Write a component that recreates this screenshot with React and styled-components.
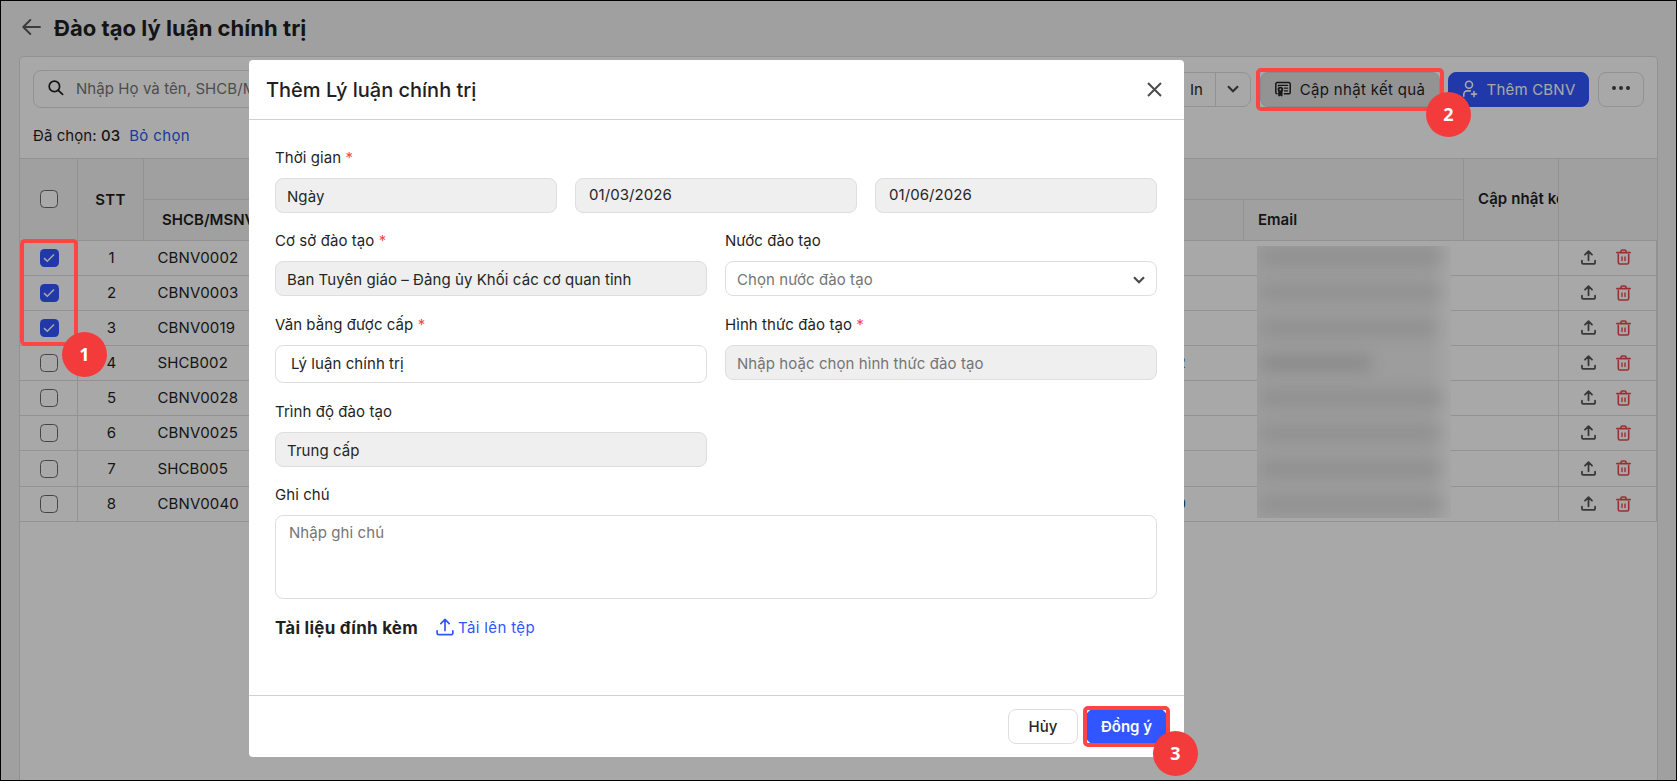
import React from 'react';
import styled, { createGlobalStyle } from 'styled-components';

const GlobalStyle = createGlobalStyle`
  *, *::before, *::after { box-sizing: border-box; }
  body {
    margin: 0;
    overflow: hidden;
    font-family: Inter, "Liberation Sans", sans-serif;
    font-size: 15px;
    letter-spacing: 0.07px;
    color: #1f1f1f;
  }
  svg { display: block; flex: none; }
`;

const Screen = styled.div`
  position: relative;
  width: 1677px;
  height: 781px;
  overflow: hidden;
  background: #f3f3f3;
`;

const Outline = styled.div`
  position: absolute;
  inset: 0;
  border: 1px solid #000;
`;

const PageColumn = styled.div`
  height: 100%;
  padding: 0 19px;
  display: flex;
  flex-direction: column;
`;

const PageHeader = styled.header`
  height: 56px;
  flex: none;
  display: flex;
  align-items: center;
  gap: 13px;
  padding-left: 3px;
`;

const PageTitle = styled.h1`
  margin: 0;
  font-size: 22px;
  line-height: 30px;
  font-weight: 650;
  letter-spacing: 0.04px;
`;

const Panel = styled.main`
  position: relative;
  flex: 1;
  background: #fff;
  border: 1px solid #dedede;
  border-bottom: 0;
  border-radius: 5px 5px 0 0;
`;

const Toolbar = styled.div`
  display: flex;
  align-items: center;
  justify-content: space-between;
  height: 38px;
  margin: 13px 13px 0 13px;
`;

const SearchBox = styled.div`
  display: flex;
  align-items: center;
  gap: 12px;
  width: 420px;
  height: 38px;
  padding: 0 0 2px 14px;
  border: 1px solid #dedede;
  border-radius: 8px;
  color: #757575;
  white-space: nowrap;
`;

const Actions = styled.div`
  display: flex;
  align-items: center;
`;

const SplitButton = styled.div`
  display: flex;
  height: 35px;
  margin-right: 9px;
  border: 1px solid #dedede;
  border-radius: 8px;
`;

const SplitPart = styled.span`
  display: flex;
  align-items: center;
  justify-content: ${p => (p.$end ? 'flex-end' : 'center')};
  width: ${p => p.$width}px;
  padding-right: ${p => (p.$end ? 12 : 0)}px;
  border-left: ${p => (p.$divided ? '1px solid #dedede' : '0')};
`;

const ToolButton = styled.button`
  display: flex;
  align-items: center;
  justify-content: center;
  gap: ${p => p.$gap || 9}px;
  width: ${p => p.$width}px;
  height: 35px;
  margin: 0 0 0 ${p => p.$before || 0}px;
  padding: 0;
  border: 1px solid ${p => p.$line || '#dedede'};
  border-radius: 8px;
  background: ${p => p.$fill || 'transparent'};
  color: ${p => p.$ink || '#1f1f1f'};
  font: inherit;
  letter-spacing: ${p => p.$track || 0}px;
  white-space: nowrap;
`;

const Selection = styled.div`
  display: flex;
  gap: 9px;
  height: 50px;
  padding: 17px 13px 0;
  line-height: 22px;
`;

const Count = styled.span`
  font-weight: 500;
`;

const Link = styled.a`
  color: #3156f5;
  letter-spacing: 0.35px;
`;

const columns = '58px 66px 1100px 220px 95px 98px';

const TableHead = styled.div`
  display: grid;
  grid-template-columns: 58px 66px 1320px 95px 98px;
  height: 82px;
  border-top: 1px solid #dedede;
  background: #f3f3f3;
  font-weight: 600;
`;

const HeadCell = styled.div`
  display: flex;
  align-items: center;
  justify-content: ${p => (p.$start ? 'flex-start' : 'center')};
  padding: 0 0 ${p => p.$lift || 0}px ${p => p.$start || 0}px;
  border-right: ${p => (p.$last ? '0' : '1px solid #dedede')};
  border-bottom: 1px solid #dedede;
  letter-spacing: ${p => p.$track || 0}px;
  overflow: hidden;
  white-space: nowrap;
`;

const HeadGroup = styled.div`
  display: grid;
  grid-template-columns: 1100px 220px;
  grid-template-rows: 41px 41px;
`;

const GroupTitle = styled.div`
  grid-column: span 2;
  border-right: 1px solid #dedede;
  border-bottom: 1px solid #dedede;
`;

const Row = styled.div`
  display: grid;
  grid-template-columns: ${columns};
  height: ${p => p.$height}px;
  border-bottom: 1px solid #dedede;
`;

const Cell = styled.div`
  display: flex;
  align-items: center;
  justify-content: ${p => p.$align || 'center'};
  gap: 20px;
  padding: ${p => p.$pad || '0 0 1px 1px'};
  border-right: ${p => (p.$lined ? '1px solid #dedede' : '0')};
`;

const CodeText = styled.span`
  letter-spacing: 0.12px;
`;

const PhoneTail = styled.span`
  color: ${p => p.$ink};
`;

const CheckBox = styled.span`
  display: flex;
  align-items: center;
  justify-content: center;
  width: ${p => (p.$on ? 19 : 18)}px;
  height: 18px;
  margin-left: ${p => (p.$on ? 1 : 0)}px;
  border: ${p => (p.$on ? '0' : '1px solid #6a6a6a')};
  border-radius: 4.5px;
  background: ${p => (p.$on ? '#3156ff' : '#fff')};
`;

const Redaction = styled.div`
  position: absolute;
  left: 1237px;
  top: 189px;
  width: 194px;
  height: 272px;
  padding: 4px 12px 0 4px;
  overflow: hidden;
  background: linear-gradient(to right, #eeeeee 0 88%, #fcfcfc 100%);
`;

const Smudge = styled.div`
  width: ${p => p.$width}px;
  height: 14px;
  margin-bottom: 21.3px;
  background: ${p => p.$tone};
  filter: blur(8px);
`;

const Backdrop = styled.div`
  position: absolute;
  inset: 0;
  background: rgba(0, 0, 0, 0.34);
`;

const Modal = styled.section`
  position: absolute;
  left: 249px;
  top: 60px;
  width: 935px;
  height: 697px;
  display: flex;
  flex-direction: column;
  border-radius: 4px;
  background: #fff;
`;

const ModalHeader = styled.div`
  display: flex;
  align-items: center;
  justify-content: space-between;
  height: 60px;
  padding: 0 22px 0 17px;
  border-bottom: 1px solid #d2d2d2;
`;

const ModalTitle = styled.h2`
  margin: 0;
  font-size: 20px;
  line-height: 28px;
  font-weight: 550;
  letter-spacing: 0;
`;

const ModalBody = styled.div`
  flex: 1;
  padding: 27px 27px 0 26px;
`;

const FormRow = styled.div`
  display: grid;
  grid-template-columns: ${p => p.$cols};
  gap: 18px;
  align-items: start;
  margin-top: ${p => p.$top || 0}px;
`;

const FieldWrap = styled.label`
  display: block;
  min-width: 0;
`;

const LabelText = styled.span`
  display: block;
  height: 22px;
  margin-bottom: 9px;
  line-height: 21px;
  white-space: pre;
`;

const Star = styled.span`
  color: #f5484a;
`;

const Control = styled.div`
  display: flex;
  align-items: ${p => (p.$area ? 'flex-start' : 'center')};
  justify-content: space-between;
  height: ${p => p.$height || 35}px;
  padding: ${p => p.$pad || '2px 11px 0'};
  border: 1px solid #dedede;
  border-radius: 8px;
  background: ${p => (p.$off ? '#efefef' : '#fff')};
  color: ${p => (p.$hint ? '#757575' : '#262626')};
  white-space: nowrap;
`;

const Attachment = styled.div`
  display: flex;
  align-items: center;
  gap: 18px;
  height: 22px;
  margin-top: 17px;
`;

const AttachmentTitle = styled.span`
  padding-top: 2px;
  font-size: 17px;
  font-weight: 650;
  letter-spacing: 0.25px;
`;

const UploadLink = styled.a`
  display: flex;
  align-items: center;
  gap: 4px;
  color: #3156ff;
  letter-spacing: 0.36px;
`;

const ModalFooter = styled.div`
  display: flex;
  justify-content: flex-end;
  gap: 8px;
  height: 62px;
  padding: 13px 17px 0;
  border-top: 1px solid #d2d2d2;
`;

const FooterButton = styled.button`
  width: ${p => p.$width}px;
  height: 35px;
  padding: 0;
  border: 1px solid ${p => (p.$primary ? '#3156ff' : '#dedede')};
  border-radius: 8px;
  background: ${p => (p.$primary ? '#3156ff' : '#fff')};
  color: ${p => (p.$primary ? '#fff' : '#262626')};
  font: inherit;
  font-weight: ${p => (p.$primary ? 600 : 500)};
`;

const Frame = styled.div`
  position: absolute;
  left: ${p => p.$x}px;
  top: ${p => p.$y}px;
  width: ${p => p.$w}px;
  height: ${p => p.$h}px;
  border: 4px solid #ff4444;
  border-radius: 5px;
`;

const Badge = styled.div`
  position: absolute;
  left: ${p => p.$x}px;
  top: ${p => p.$y}px;
  width: 45px;
  height: 45px;
  border-radius: 50%;
  background: #f33b3b;
  color: #fff;
  font: 700 18px/45px "Noto Sans", "Open Sans", sans-serif;
  text-align: center;
`;

const line = { fill: 'none', strokeLinecap: 'round', strokeLinejoin: 'round' };

const BackIcon = () => (
  <svg width="19" height="18" viewBox="0 0 19 18" {...line} stroke="#5a5a5a" strokeWidth="1.9">
    <path d="M18 8H1.5M8.3 1 1.3 8 8.3 15" />
  </svg>
);
const SearchIcon = () => (
  <svg width="16" height="16" viewBox="0 0 16 16" {...line} stroke="#1f1f1f" strokeWidth="1.7">
    <circle cx="6.4" cy="6.4" r="5.2" />
    <path d="m10.3 10.3 4.3 4" />
  </svg>
);
const ChevronIcon = () => (
  <svg width="12" height="8" viewBox="0 0 12 8" fill="none" stroke="#4a4a4a" strokeWidth="2.2">
    <path d="m1 1.2 5 5 5-5" />
  </svg>
);
const CloseIcon = () => (
  <svg width="15" height="15" viewBox="0 0 15 15" fill="none" stroke="#4c4c4c" strokeWidth="2">
    <path d="m1 1 13 13M14 1 1 14" />
  </svg>
);
const CertificateIcon = () => (
  <svg width="16" height="16" viewBox="0 0 16 16" {...line} stroke="#222" strokeWidth="1.5">
    <path d="M2 12.8a1.3 1.3 0 0 1-1.2-1.3V3A1.4 1.4 0 0 1 2.2 1.6h11.6A1.4 1.4 0 0 1 15.2 3v8.4a1.4 1.4 0 0 1-1.4 1.4H9.4" />
    <path d="M3.4 5V4.4h9.2M9.4 7.2h3.2M9.4 9.8h3.2" strokeWidth="1.2" />
    <circle cx="5.4" cy="8.6" r="1.9" strokeWidth="1.8" />
    <path d="M3.8 10.6v4.5l1.6-.9 1.6.9v-4.5z" fill="#222" strokeWidth="1" />
  </svg>
);
const UserAddIcon = () => (
  <svg width="16" height="18" viewBox="0 0 16 18" {...line} stroke="#fff" strokeWidth="1.6">
    <circle cx="7" cy="4.8" r="3.5" />
    <path d="M1.8 16.2v-1.8a3.5 3.5 0 0 1 3.5-3.5h3M12 11.6v5M9.5 14.1h5" />
  </svg>
);
const DotsIcon = () => (
  <svg width="18" height="6" viewBox="0 0 18 6" fill="#444">
    <circle cx="2" cy="2" r="2" />
    <circle cx="9" cy="2" r="2" />
    <circle cx="16" cy="2" r="2" />
  </svg>
);
const CheckIcon = () => (
  <svg width="12" height="10" viewBox="0 0 12 10" fill="none" stroke="#fff" strokeWidth="1.5">
    <path d="M1 5.1 4.3 8.3 11 1.5" />
  </svg>
);
const UploadIcon = ({ size = 15, color = '#555', weight = 1.9 }) => (
  <svg width={size} height={size} viewBox="0 0 16 16" {...line} stroke={color} strokeWidth={weight}>
    <path d="M1 11.4v2.2a1.2 1.2 0 0 0 1.2 1.2h11.6a1.2 1.2 0 0 0 1.2-1.2v-2.2M8 11V1.4M4.3 5 8 1.3 11.7 5" />
  </svg>
);
const TrashIcon = () => (
  <svg width="15" height="16" viewBox="0 0 15 16" {...line} stroke="#e74a4c" strokeWidth="1.6">
    <path d="M.8 3.6h13.4M5 3.4V2.2A1.2 1.2 0 0 1 6.2 1h2.6A1.2 1.2 0 0 1 10 2.2v1.2M2.3 5.6v7.8A1.6 1.6 0 0 0 3.9 15h7.2a1.6 1.6 0 0 0 1.6-1.6V5.6" />
    <path d="M6 8v3.6M9 8v3.6" strokeWidth="1.4" />
  </svg>
);

const rows = [
  { code: 'CBNV0002', on: true, h: 36 },
  { code: 'CBNV0003', on: true, h: 35 },
  { code: 'CBNV0019', on: true, h: 35 },
  { code: 'SHCB002', h: 35, tail: '2', ink: '#2a93ee' },
  { code: 'CBNV0028', h: 35 },
  { code: 'CBNV0025', h: 35 },
  { code: 'SHCB005', h: 36 },
  { code: 'CBNV0040', h: 35, tail: '0', ink: '#0a4f8c' },
];

const smudges = [
  [180, '#d6d6d6'], [178, '#d8d8d8'], [174, '#d7d7d7'], [110, '#cdcdcd'],
  [180, '#d6d6d6'], [178, '#d8d8d8'], [178, '#d6d6d6'], [180, '#d8d8d8'],
];

const Field = ({ label, required, children }) => (
  <FieldWrap>
    <LabelText>
      {label}
      {required && <Star> *</Star>}
    </LabelText>
    {children}
  </FieldWrap>
);

export default function App() {
  return (
    <>
      <GlobalStyle />
      <Screen>
        <PageColumn>
          <PageHeader>
            <BackIcon />
            <PageTitle>Đào tạo lý luận chính trị</PageTitle>
          </PageHeader>
          <Panel>
            <Toolbar>
              <SearchBox>
                <SearchIcon />
                Nhập Họ và tên, SHCB/MSNV
              </SearchBox>
              <Actions>
                <SplitButton>
                  <SplitPart $width={81} $end>In</SplitPart>
                  <SplitPart $width={35} $divided><ChevronIcon /></SplitPart>
                </SplitButton>
                <ToolButton $width={180} $fill="#dfdfdf" $line="#d2d2d2" $track={0.33}>
                  <CertificateIcon />
                  Cập nhật kết quả
                </ToolButton>
                <ToolButton $width={141} $before={8} $fill="#3156ff" $line="#3156ff" $ink="#fff" $track={0.2}>
                  <UserAddIcon />
                  Thêm CBNV
                </ToolButton>
                <ToolButton $width={46} $before={9}><DotsIcon /></ToolButton>
              </Actions>
            </Toolbar>
            <Selection>
              <span>Đã chọn: <Count>03</Count></span>
              <Link>Bỏ chọn</Link>
            </Selection>
            <TableHead>
              <HeadCell $lift={2}><CheckBox /></HeadCell>
              <HeadCell $track={0.3}>STT</HeadCell>
              <HeadGroup>
                <GroupTitle />
                <HeadCell $start={18} $lift={2}>SHCB/MSNV</HeadCell>
                <HeadCell $start={14} $lift={2}>Email</HeadCell>
              </HeadGroup>
              <HeadCell $start={14} $lift={2} $track={0.1}>Cập nhật kết quả</HeadCell>
              <HeadCell $last />
            </TableHead>
            {rows.map((r, i) => (
              <Row key={r.code} $height={r.h}>
                <Cell $lined $pad="0"><CheckBox $on={r.on}>{r.on && <CheckIcon />}</CheckBox></Cell>
                <Cell>{i + 1}</Cell>
                <Cell $align="space-between" $pad="0 58px 1px 13.5px">
                  <CodeText>{r.code}</CodeText>
                  {r.tail && <PhoneTail $ink={r.ink}>{r.tail}</PhoneTail>}
                </Cell>
                <Cell />
                <Cell $lined />
                <Cell $lined $pad="0 3px 1px 0">
                  <UploadIcon />
                  <TrashIcon />
                </Cell>
              </Row>
            ))}
            <Redaction>
              {smudges.map(([w, tone], i) => <Smudge key={i} $width={w} $tone={tone} />)}
            </Redaction>
          </Panel>
        </PageColumn>

        <Backdrop />

        <Modal>
          <ModalHeader>
            <ModalTitle>Thêm Lý luận chính trị</ModalTitle>
            <CloseIcon />
          </ModalHeader>
          <ModalBody>
            <Field label="Thời gian" required>
              <FormRow $cols="repeat(3, 1fr)">
                <Control $off>Ngày</Control>
                <Control $off $pad="0 13px 2px">01/03/2026</Control>
                <Control $off $pad="0 13px 2px">01/06/2026</Control>
              </FormRow>
            </Field>
            <FormRow $cols="1fr 1fr" $top={17}>
              <Field label="Cơ sở đào tạo" required>
                <Control $off>Ban Tuyên giáo – Đảng ủy Khối các cơ quan tỉnh</Control>
              </Field>
              <Field label="Nước đào tạo">
                <Control $hint>Chọn nước đào tạo <ChevronIcon /></Control>
              </Field>
            </FormRow>
            <FormRow $cols="1fr 1fr" $top={18}>
              <Field label="Văn bằng được cấp" required>
                <Control $height={38} $pad="0 15px 1px">Lý luận chính trị</Control>
              </Field>
              <Field label="Hình thức đào tạo" required>
                <Control $off $hint>Nhập hoặc chọn hình thức đào tạo</Control>
              </Field>
            </FormRow>
            <FormRow $cols="1fr 1fr" $top={18}>
              <Field label="Trình độ đào tạo">
                <Control $off>Trung cấp</Control>
              </Field>
            </FormRow>
            <FormRow $cols="1fr" $top={17}>
              <Field label="Ghi chú">
                <Control $area $hint $height={84} $pad="7px 13px">Nhập ghi chú</Control>
              </Field>
            </FormRow>
            <Attachment>
              <AttachmentTitle>Tài liệu đính kèm</AttachmentTitle>
              <UploadLink>
                <UploadIcon size={18} color="#3156ff" weight={1.5} />
                Tải lên tệp
              </UploadLink>
            </Attachment>
          </ModalBody>
          <ModalFooter>
            <FooterButton $width={70}>Hủy</FooterButton>
            <FooterButton $width={81} $primary>Đồng ý</FooterButton>
          </ModalFooter>
        </Modal>

        <Frame $x={20} $y={239} $w={58} $h={107} />
        <Frame $x={1256} $y={68} $w={188} $h={43} />
        <Frame $x={1083} $y={706} $w={87} $h={41} />
        <Badge $x={62} $y={332}>1</Badge>
        <Badge $x={1426} $y={92}>2</Badge>
        <Badge $x={1153} $y={731}>3</Badge>
        <Outline />
      </Screen>
    </>
  );
}
